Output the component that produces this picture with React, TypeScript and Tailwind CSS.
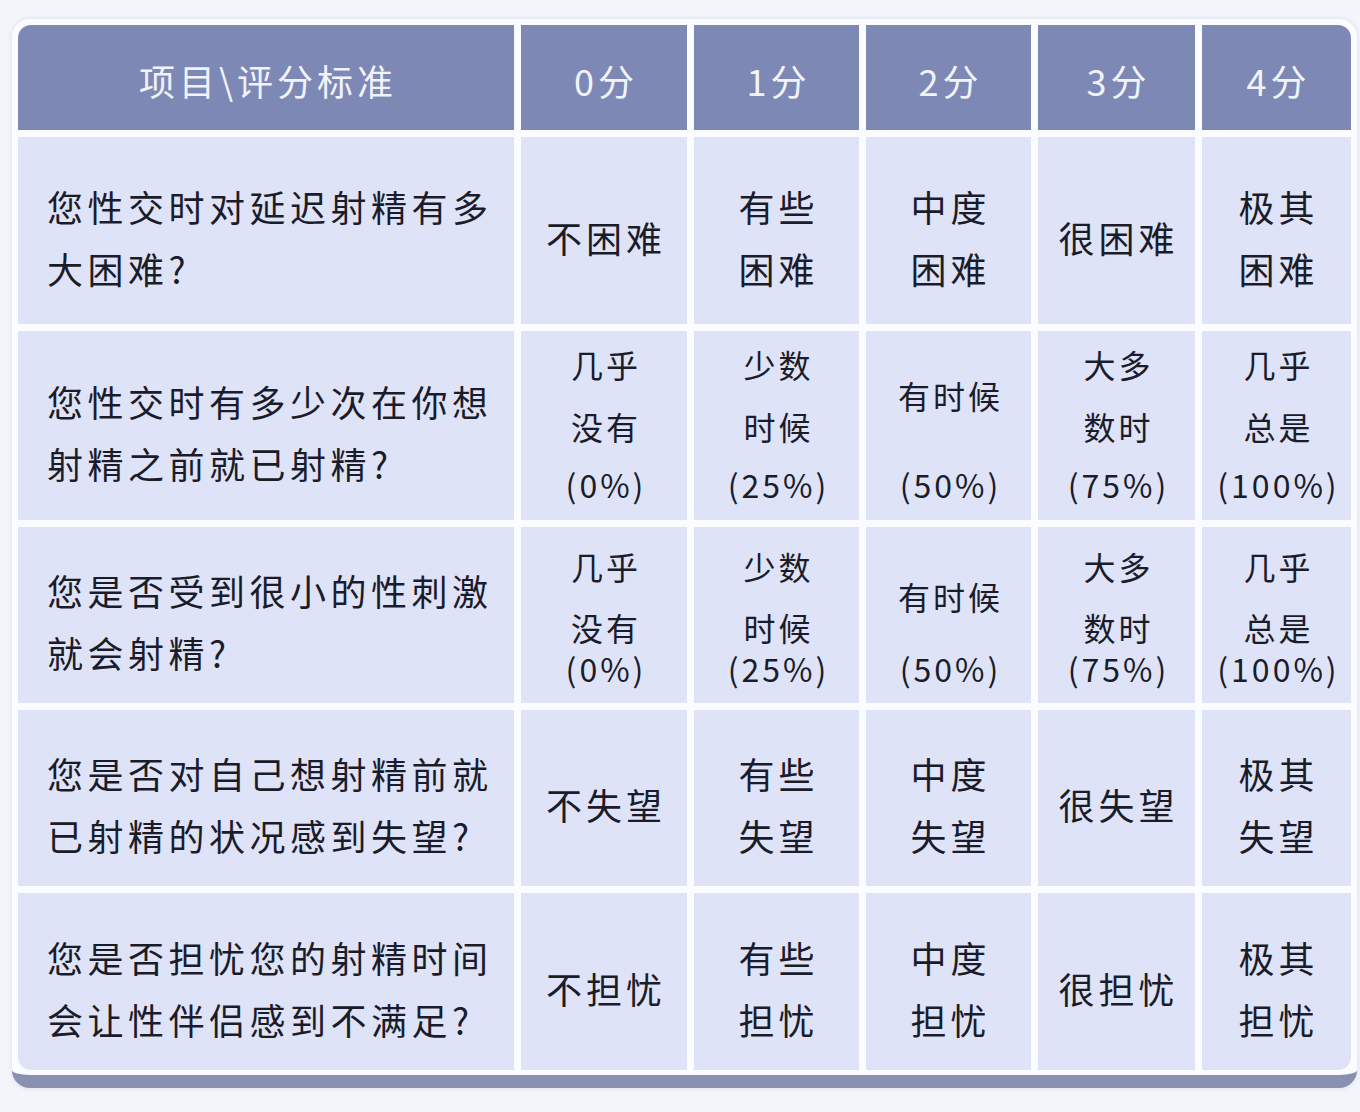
const FONT = "font-['Noto_Sans_CJK_SC','Noto_Sans',sans-serif]"

type Line = { t: string; h: string }

const HEAD = ['项目\\评分标准', '0分', '1分', '2分', '3分', '4分']

const two = (a: string, b: string): Line[] => [
  { t: a, h: 'h-[62px]' },
  { t: b, h: 'h-[62px]' },
]
const one = (a: string): Line[] => [{ t: a, h: 'h-[62px]' }]

const pct2 = (a: string, b: string, c: string): Line[] => [
  { t: a, h: 'h-[62px]' },
  { t: b, h: 'h-[62px]' },
  { t: c, h: 'h-[54px]' },
]
const pct2mid = (a: string, c: string): Line[] => [
  { t: a, h: 'h-[124px]' },
  { t: c, h: 'h-[54px]' },
]
const pct3 = (a: string, b: string, c: string): Line[] => [
  { t: a, h: 'h-[61px]' },
  { t: b, h: 'h-[61px]' },
  { t: c, h: 'h-[22px]' },
]
const pct3mid = (a: string, c: string): Line[] => [
  { t: a, h: 'h-[122px]' },
  { t: c, h: 'h-[22px]' },
]

const ROWS: { q: string[]; h: string; small?: boolean; pad?: string; cells: Line[][] }[] = [
  {
    q: ['您性交时对延迟射精有多', '大困难?'],
    h: 'h-[187px]',
    cells: [one('不困难'), two('有些', '困难'), two('中度', '困难'), one('很困难'), two('极其', '困难')],
  },
  {
    q: ['您性交时有多少次在你想', '射精之前就已射精?'],
    h: 'h-[189px]',
    small: true,
    pad: 'pb-2',
    cells: [
      pct2('几乎', '没有', '(0%)'),
      pct2('少数', '时候', '(25%)'),
      pct2mid('有时候', '(50%)'),
      pct2('大多', '数时', '(75%)'),
      pct2('几乎', '总是', '(100%)'),
    ],
  },
  {
    q: ['您是否受到很小的性刺激', '就会射精?'],
    h: 'h-[176px]',
    small: true,
    pad: 'pb-4',
    cells: [
      pct3('几乎', '没有', '(0%)'),
      pct3('少数', '时候', '(25%)'),
      pct3mid('有时候', '(50%)'),
      pct3('大多', '数时', '(75%)'),
      pct3('几乎', '总是', '(100%)'),
    ],
  },
  {
    q: ['您是否对自己想射精前就', '已射精的状况感到失望?'],
    h: 'h-[176px]',
    cells: [one('不失望'), two('有些', '失望'), two('中度', '失望'), one('很失望'), two('极其', '失望')],
  },
  {
    q: ['您是否担忧您的射精时间', '会让性伴侣感到不满足?'],
    h: 'h-[177px]',
    cells: [one('不担忧'), two('有些', '担忧'), two('中度', '担忧'), one('很担忧'), two('极其', '担忧')],
  },
]

export default function App() {
  return (
    <div className={`w-[1360px] h-[1112px] bg-[#f3f5fb] pt-[19px] pl-[12px] ${FONT}`}>
      <div className="w-[1345px] bg-[#fbfcff] rounded-[18px] px-[6px] pt-[6px] pb-[5px] border-b-[13px] border-[#8a90b2] shadow-[0_0_4px_rgba(140,150,190,0.25)]">
        <div className="grid grid-cols-[496px_166px_165px_165px_157px_149px] gap-[7px]">
          {/* Header */}
          {HEAD.map((h, i) => (
            <div
              key={h}
              className={`h-[105px] bg-[#7e88b4] flex items-center justify-center pl-[4px] pt-1 text-[#f1f3fb] text-[36px] tracking-[4px] ${
                i === 0 ? 'rounded-tl-[13px]' : ''
              } ${i === 5 ? 'rounded-tr-[13px]' : ''}`}
            >
              {h}
            </div>
          ))}

          {/* Body rows */}
          {ROWS.map((r, ri) => {
            const last = ri === ROWS.length - 1
            return [
              <div
                key={`q${ri}`}
                className={`${r.h} bg-[#dfe3f8] flex flex-col justify-center pl-[29px] pt-3 text-[#1b1c2a] text-[36px] tracking-[4.5px] leading-[62px] ${
                  last ? 'rounded-bl-[13px]' : ''
                }`}
              >
                {r.q.map((l) => (
                  <div key={l}>{l}</div>
                ))}
              </div>,
              ...r.cells.map((c, ci) => (
                <div
                  key={`c${ri}-${ci}`}
                  className={`${r.h} bg-[#dfe3f8] flex flex-col items-center justify-center pl-[4px] text-[#1b1c2a] ${
                    r.small ? `text-[32px] tracking-[3px] ${r.pad}` : 'text-[36px] tracking-[4px] pt-3'
                  } ${last && ci === 4 ? 'rounded-br-[13px]' : ''}`}
                >
                  {c.map((l, li) => (
                    <div key={li} className={`${l.h} flex items-center whitespace-nowrap`}>
                      {l.t}
                    </div>
                  ))}
                </div>
              )),
            ]
          })}
        </div>
      </div>
    </div>
  )
}
